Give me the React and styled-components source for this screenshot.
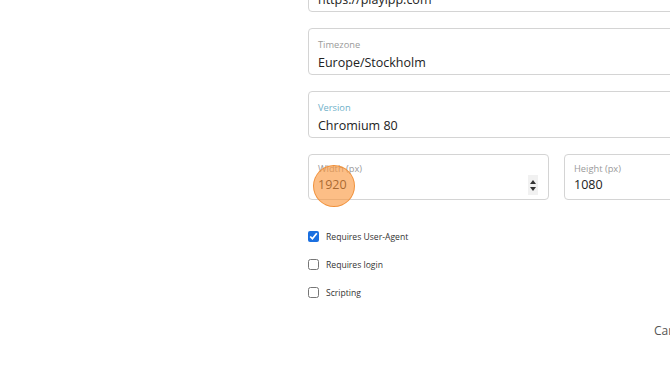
import React from "react";
import styled, { createGlobalStyle } from "styled-components";

const GlobalStyle = createGlobalStyle`
  html, body {
    margin: 0;
    padding: 0;
    background: #ffffff;
    overflow: hidden;
    font-family: "Open Sans", "Noto Sans", sans-serif;
  }
`;

const Page = styled.div`
  width: 670px;
  height: 373px;
  overflow: hidden;
  background: #fff;
`;

const Form = styled.div`
  width: 460px;
  margin-left: 308px;
  margin-top: -35px;
  display: flex;
  flex-direction: column;
  gap: 16px;
`;

const Row = styled.div`
  display: flex;
  gap: 15px;
`;

const Field = styled.div`
  position: relative;
  box-sizing: border-box;
  height: ${(p) => (p.short ? "46px" : "47px")};
  width: ${(p) => (p.half ? "241px" : "100%")};
  flex-shrink: 0;
  border: 1px solid #d4d4d4;
  border-radius: 4px;
  padding: ${(p) => (p.short ? "8px" : "10px")} 10px 0 9px;
  display: flex;
  flex-direction: column;
`;

const Label = styled.span`
  font-size: 9.3px;
  line-height: 12px;
  color: ${(p) => (p.focus ? "#6fb1c9" : "#9a9a9a")};
`;

const Value = styled.span`
  font-size: 12.5px;
  line-height: 18px;
  margin-top: ${(p) => (p.tight ? "1px" : "3px")};
  color: #222;
`;

const Spinner = styled.div`
  position: absolute;
  right: 10px;
  top: 20px;
  width: 10px;
  height: 20px;
  background: #f1f1f1;
  display: flex;
  flex-direction: column;
  align-items: center;
  justify-content: center;
  gap: 3px;
`;

const Tap = styled.div`
  position: absolute;
  left: 4px;
  top: 10px;
  width: 42px;
  height: 42px;
  box-sizing: border-box;
  border-radius: 50%;
  background: rgba(250, 150, 60, 0.62);
  border: 1.5px solid rgba(240, 140, 50, 0.9);
`;

const Checks = styled.div`
  margin-top: 14px;
  display: flex;
  flex-direction: column;
  gap: 15px;
`;

const CheckRow = styled.label`
  display: flex;
  align-items: center;
  gap: 7px;
  height: 13px;
  font-size: 8.6px;
  color: #333;
`;

const Box = styled.input`
  margin: 0;
  width: 11px;
  height: 11px;
  accent-color: #1a6fe0;
`;

const Footer = styled.div`
  margin-top: 7px;
  padding-left: 346px;
  display: flex;
  gap: 20px;
  font-size: 12px;
  color: #555;
`;

const Arrow = ({ up }) => (
  <svg width="6" height="4" viewBox="0 0 6 4">
    <path d={up ? "M0 4 L3 0 L6 4 Z" : "M0 0 L3 4 L6 0 Z"} fill="#333" />
  </svg>
);

export default function App() {
  return (
    <Page>
      <GlobalStyle />
      <Form>
        <Field>
          <Label>Website URL</Label>
          <Value>https://playipp.com</Value>
        </Field>
        <Field>
          <Label>Timezone</Label>
          <Value>Europe/Stockholm</Value>
        </Field>
        <Field>
          <Label focus>Version</Label>
          <Value>Chromium 80</Value>
        </Field>
        <Row>
          <Field half short>
            <Label>Width (px)</Label>
            <Value tight>1920</Value>
            <Spinner>
              <Arrow up />
              <Arrow />
            </Spinner>
            <Tap />
          </Field>
          <Field half short>
            <Label>Height (px)</Label>
            <Value tight>1080</Value>
          </Field>
        </Row>
        <Checks>
          <CheckRow>
            <Box type="checkbox" defaultChecked />
            Requires User-Agent
          </CheckRow>
          <CheckRow>
            <Box type="checkbox" />
            Requires login
          </CheckRow>
          <CheckRow>
            <Box type="checkbox" />
            Scripting
          </CheckRow>
        </Checks>
        <Footer>
          <span>Cancel</span>
          <span>Save</span>
        </Footer>
      </Form>
    </Page>
  );
}
